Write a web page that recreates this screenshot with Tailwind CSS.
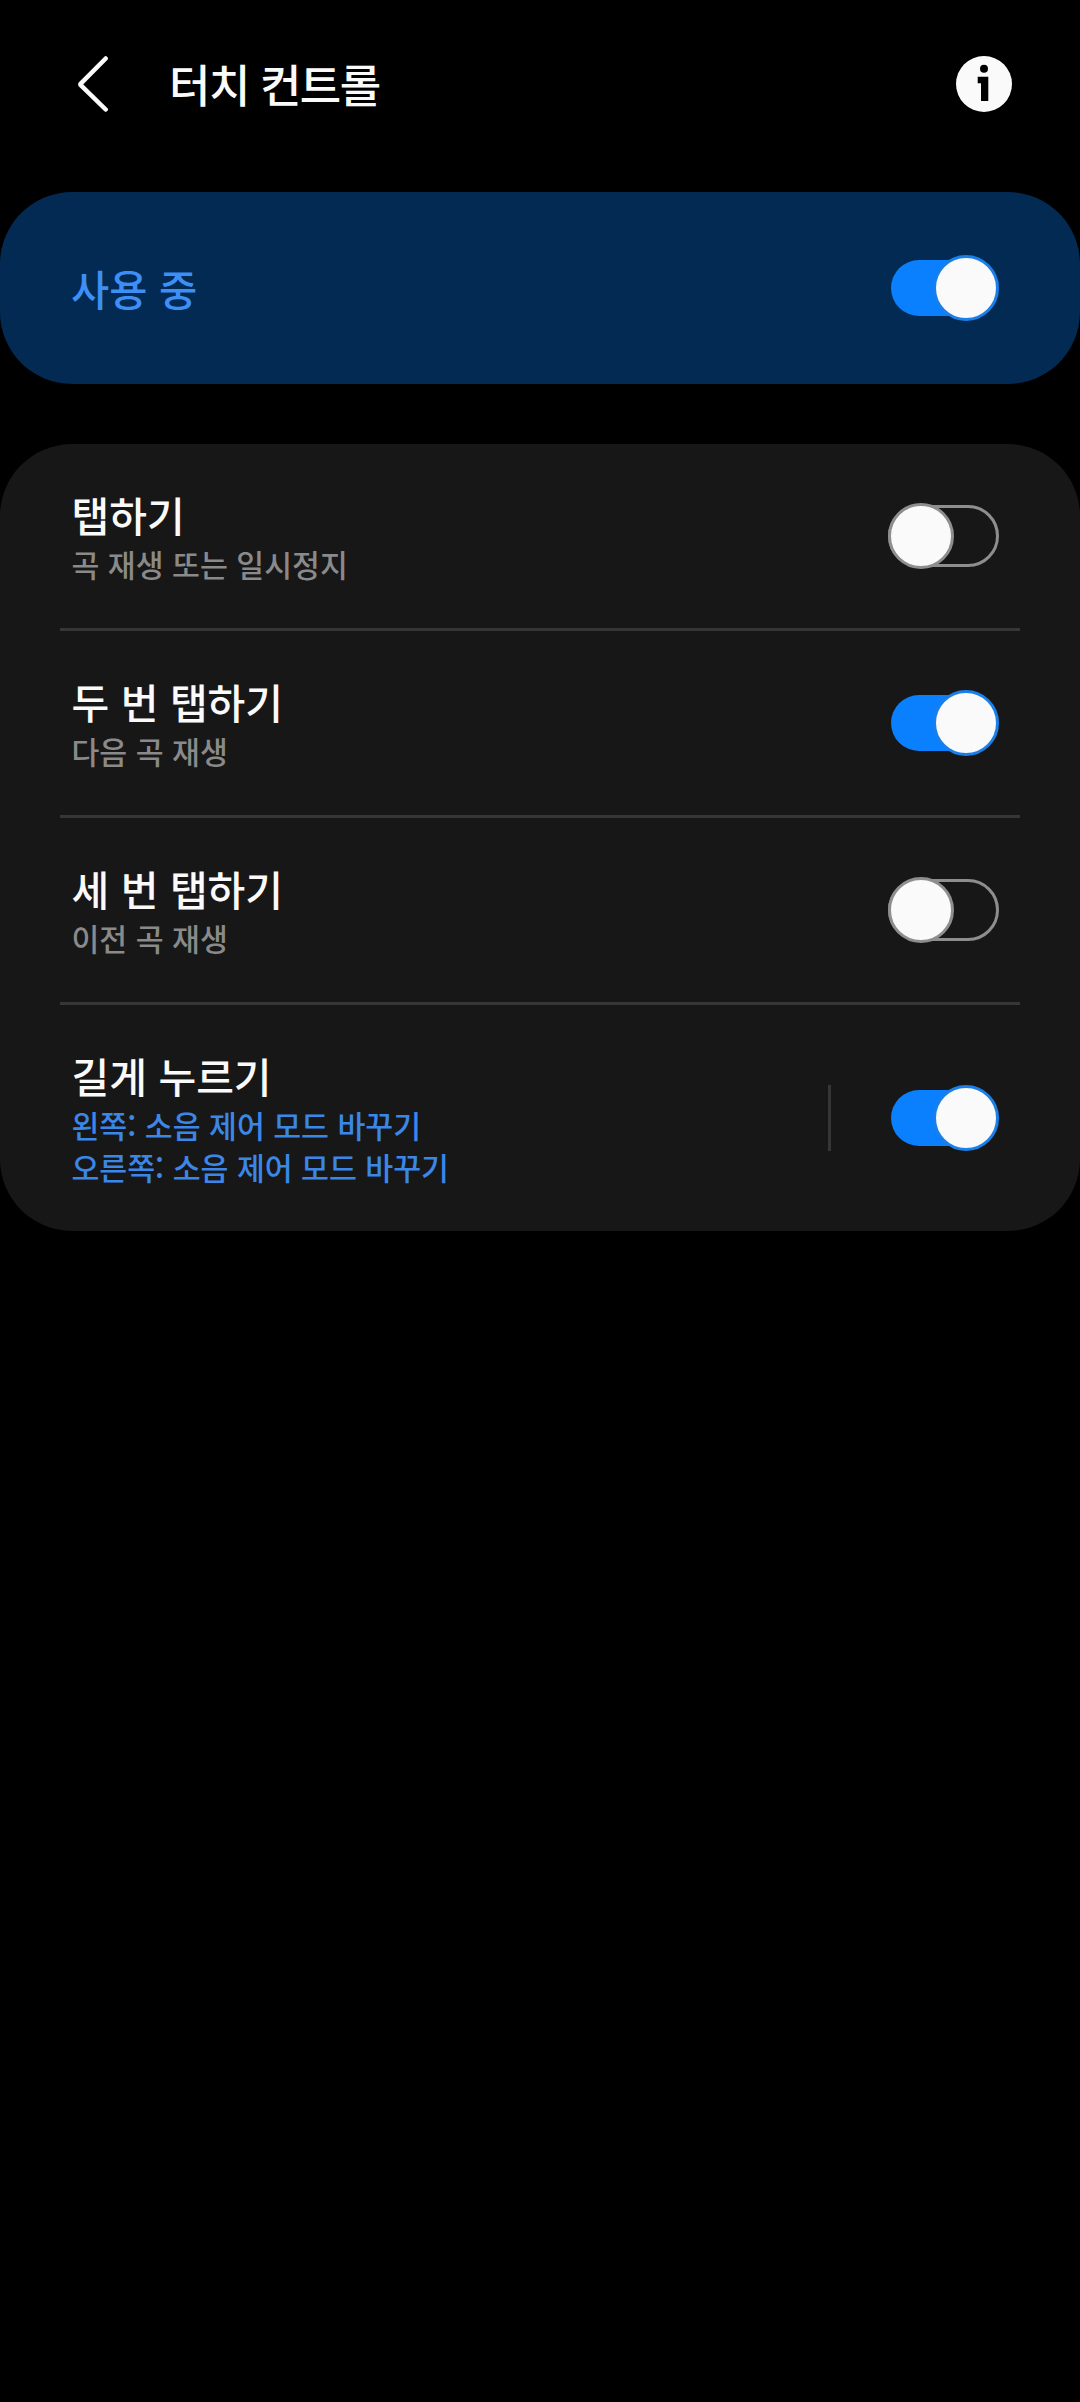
<!DOCTYPE html>
<html lang="ko">
<head>
    <meta charset="UTF-8">
    <meta name="viewport" content="width=device-width, initial-scale=1.0">
    <title>터치 컨트롤</title>
    <script src="https://cdn.jsdelivr.net/npm/@tailwindcss/browser@4"></script>
</head>
<body class="bg-black w-[1080px] h-[2402px] overflow-hidden font-['Noto_Sans_CJK_KR','Noto_Sans',sans-serif]">

    <!-- Header -->
    <header class="h-[192px] flex items-center justify-between pb-[24px] pl-[76px] pr-[68px]">
        <div class="flex items-center gap-[60px]">
            <svg width="33" height="56" viewBox="0 0 33 56" fill="none">
                <path d="M29.7 2.5 L4.5 27.8 a1 1 0 0 0 0 1 L29.7 53.5" stroke="#fafafa" stroke-width="4.5" stroke-linecap="round" stroke-linejoin="round"/>
            </svg>
            <h1 class="text-[45px] leading-[56px] font-medium text-[#fafafa] tracking-[-1.5px]">터치 컨트롤</h1>
        </div>
        <svg width="56" height="56" viewBox="0 0 56 56">
            <circle cx="28" cy="28" r="28" fill="#fafafa"/>
            <circle cx="28" cy="12.7" r="4" fill="#000"/>
            <path d="M21.7 20.7 H32.3 V45 H25 V27.3 H21.7 Z" fill="#000"/>
        </svg>
    </header>

    <!-- Master switch -->
    <section class="h-[192px] rounded-[72px] bg-[#022a52] flex items-center justify-between pl-[71px] pr-[81px]">
        <span class="text-[41.5px] leading-[58px] font-medium text-[#3e8ff5]">사용 중</span>
        <div class="relative w-[111px] h-[66px] flex items-center">
            <div class="ml-[3px] w-[106px] h-[56px] rounded-full bg-[#0a80ff]"></div>
            <div class="absolute right-0 top-0 size-[66px] rounded-full bg-[#fafafa] border-[3px] border-[#1a7fe8]"></div>
        </div>
    </section>

    <!-- Gesture list -->
    <section class="mt-[60px] rounded-[72px] bg-[#171717]">
        <div class="h-[184px] flex items-center justify-between pl-[71.5px] pr-[81px]">
            <div class="pb-[2px]">
                <p class="text-[41px] leading-[58px] font-medium text-[#fafafa]">탭하기</p>
                <p class="text-[30.3px] leading-[42px] font-medium text-[#8a8a8a]">곡 재생 또는 일시정지</p>
            </div>
            <div class="relative w-[111px] h-[66px] flex items-center">
                <div class="w-full h-[62px] rounded-full border-[3px] border-[#8e8e8e]"></div>
                <div class="absolute left-0 top-0 size-[66px] rounded-full bg-[#fafafa] border-[3px] border-[#8e8e8e]"></div>
            </div>
        </div>
        <div class="h-[3px] ml-[60px] mr-[60px] bg-[#363636]"></div>

        <div class="h-[184px] flex items-center justify-between pl-[71.5px] pr-[81px]">
            <div class="pb-[2px]">
                <p class="text-[41px] leading-[58px] font-medium text-[#fafafa]">두 번 탭하기</p>
                <p class="text-[30.3px] leading-[42px] font-medium text-[#8a8a8a]">다음 곡 재생</p>
            </div>
            <div class="relative w-[111px] h-[66px] flex items-center">
                <div class="ml-[3px] w-[106px] h-[56px] rounded-full bg-[#0a80ff]"></div>
                <div class="absolute right-0 top-0 size-[66px] rounded-full bg-[#fafafa] border-[3px] border-[#1a7fe8]"></div>
            </div>
        </div>
        <div class="h-[3px] ml-[60px] mr-[60px] bg-[#363636]"></div>

        <div class="h-[184px] flex items-center justify-between pl-[71.5px] pr-[81px]">
            <div class="pb-[2px]">
                <p class="text-[41px] leading-[58px] font-medium text-[#fafafa]">세 번 탭하기</p>
                <p class="text-[30.3px] leading-[42px] font-medium text-[#8a8a8a]">이전 곡 재생</p>
            </div>
            <div class="relative w-[111px] h-[66px] flex items-center">
                <div class="w-full h-[62px] rounded-full border-[3px] border-[#8e8e8e]"></div>
                <div class="absolute left-0 top-0 size-[66px] rounded-full bg-[#fafafa] border-[3px] border-[#8e8e8e]"></div>
            </div>
        </div>
        <div class="h-[3px] ml-[60px] mr-[60px] bg-[#363636]"></div>

        <div class="h-[226px] flex items-center pl-[71.5px] pr-[81px]">
            <div class="pb-[2px]">
                <p class="text-[41px] leading-[58px] font-medium text-[#fafafa]">길게 누르기</p>
                <p class="text-[30.3px] leading-[42px] font-medium text-[#3b87e8]">왼쪽: 소음 제어 모드 바꾸기</p>
                <p class="text-[30.3px] leading-[42px] font-medium text-[#3b87e8]">오른쪽: 소음 제어 모드 바꾸기</p>
            </div>
            <div class="ml-auto mr-[57px] w-[3px] h-[66px] bg-[#363636]"></div>
            <div class="relative w-[111px] h-[66px] flex items-center">
                <div class="ml-[3px] w-[106px] h-[56px] rounded-full bg-[#0a80ff]"></div>
                <div class="absolute right-0 top-0 size-[66px] rounded-full bg-[#fafafa] border-[3px] border-[#1a7fe8]"></div>
            </div>
        </div>
    </section>
</body>
</html>
